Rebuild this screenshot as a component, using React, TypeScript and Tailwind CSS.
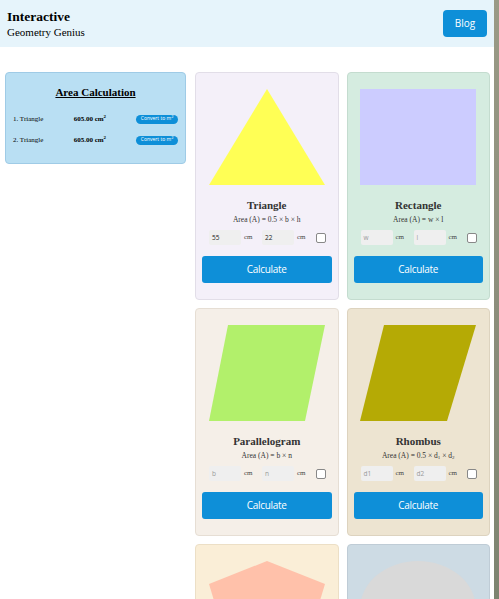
import React from "react";

const serif = { fontFamily: '"Liberation Serif", "Times New Roman", serif' };
const sans = { fontFamily: '"Open Sans", "DejaVu Sans", sans-serif' };

type Card = {
  name: string;
  bg: string;
  shape: React.ReactNode;
  formula: React.ReactNode;
  inputs: [string, string, boolean];
};

function Shape({ children }: { children: React.ReactNode }) {
  return (
    <svg width="116" height="96" viewBox="0 0 116 96" className="block mx-auto">
      {children}
    </svg>
  );
}

const cards: Card[] = [
  {
    name: "Triangle",
    bg: "bg-[#f4f0f9] border-[#e2dee8]",
    shape: (
      <Shape>
        <polygon points="58,0 116,96 0,96" fill="#ffff55" />
      </Shape>
    ),
    formula: <>Area (A) = 0.5 × b × h</>,
    inputs: ["55", "22", true],
  },
  {
    name: "Rectangle",
    bg: "bg-[#d5ece0] border-[#c4dccf]",
    shape: (
      <Shape>
        <rect x="0" y="0" width="116" height="96" fill="#ccccff" />
      </Shape>
    ),
    formula: <>Area (A) = w × l</>,
    inputs: ["w", "l", false],
  },
  {
    name: "Parallelogram",
    bg: "bg-[#f5efe8] border-[#e6ded4]",
    shape: (
      <Shape>
        <polygon points="19,0 116,0 96,96 0,96" fill="#b2f06b" />
      </Shape>
    ),
    formula: <>Area (A) = b × n</>,
    inputs: ["b", "n", false],
  },
  {
    name: "Rhombus",
    bg: "bg-[#ede4d1] border-[#ddd3bf]",
    shape: (
      <Shape>
        <polygon points="24,0 116,0 87,96 0,96" fill="#b5aa05" />
      </Shape>
    ),
    formula: (
      <>
        Area (A) = 0.5 × d<sub className="text-[5px]">1</sub> × d
        <sub className="text-[5px]">2</sub>
      </>
    ),
    inputs: ["d1", "d2", false],
  },
  {
    name: "Pentagon",
    bg: "bg-[#faeed7] border-[#ecdfc6]",
    shape: (
      <Shape>
        <polygon points="58,0 116,23 94,96 22,96 0,23" fill="#ffc1aa" />
      </Shape>
    ),
    formula: <>Area (A) = 0.5 × p × a</>,
    inputs: ["p", "a", false],
  },
  {
    name: "Circle",
    bg: "bg-[#cddbe4] border-[#bfccd6]",
    shape: (
      <Shape>
        <ellipse cx="58" cy="48" rx="58" ry="48" fill="#d9d9d9" />
      </Shape>
    ),
    formula: <>Area (A) = π × r²</>,
    inputs: ["r", "", false],
  },
];

function InputBox({ v, filled }: { v: string; filled: boolean }) {
  return (
    <div
      className={`w-[32px] h-[15px] bg-[#efefef] rounded-[2px] flex items-center pl-[3px] text-[6.5px] ${
        filled ? "text-[#222]" : "text-[#999]"
      }`}
      style={sans}
    >
      {v}
    </div>
  );
}

function ShapeCard({ c }: { c: Card }) {
  return (
    <div className={`border rounded-[4px] ${c.bg} pt-[16px] pb-[16px] px-[6px] h-[228px]`}>
      {c.shape}
      <div
        className="mt-[14px] text-center font-bold text-[11px] leading-[13px] text-[#333]"
        style={serif}
      >
        {c.name}
      </div>
      <div className="mt-[3px] text-center text-[7.5px] leading-[10px] text-[#333]" style={serif}>
        {c.formula}
      </div>
      <div className="mt-[5px] flex items-center pl-[7px] text-[7px] text-[#444]" style={serif}>
        <InputBox v={c.inputs[0]} filled={c.inputs[2]} />
        <span className="ml-[3px] w-[18px]">cm</span>
        <InputBox v={c.inputs[1]} filled={c.inputs[2]} />
        <span className="ml-[3px]">cm</span>
        <div className="ml-[10px] w-[10px] h-[10px] bg-white border border-[#888] rounded-[2px]" />
      </div>
      <button
        className="mt-[11px] w-full h-[27px] bg-[#0e8fd8] rounded-[3px] text-white text-[10px] tracking-[-0.03em]"
        style={sans}
      >
        Calculate
      </button>
    </div>
  );
}

export default function App() {
  return (
    <div className="flex w-[499px] h-[599px] overflow-hidden bg-white">
      <div className="w-[494px] shrink-0 flex flex-col">
        <header className="h-[47px] shrink-0 bg-[#e6f4fb] flex items-center justify-between pl-[7px] pr-[7px]">
          <div style={serif} className="text-black">
            <div className="font-bold text-[13.5px] leading-[15px]">Interactive</div>
            <div className="text-[11px] leading-[14px] mt-[1px]">Geometry Genius</div>
          </div>
          <button
            className="w-[44px] h-[27px] bg-[#0e8fd8] rounded-[4px] text-white text-[10px]"
            style={sans}
          >
            Blog
          </button>
        </header>
        <main className="flex items-start shrink-0 pt-[25px] pl-[5px]">
          <div className="w-[181px] h-[92px] bg-[#b9dff3] border border-[#9fcbe6] rounded-[4px] px-[7px] pt-[13px]">
            <div
              className="text-center font-bold text-[11px] leading-[13px] underline text-black"
              style={serif}
            >
              Area Calculation
            </div>
            {["1. Triangle", "2. Triangle"].map((t, i) => (
              <div
                key={t}
                className={`flex items-center h-[12px] ${i === 0 ? "mt-[14px]" : "mt-[9px]"}`}
                style={serif}
              >
                <span className="w-[61px] text-[7px] text-black">{t}</span>
                <span className="w-[63px] text-[7px] font-bold text-black">
                  605.00 cm<sup className="text-[5px]">2</sup>
                </span>
                <span
                  className="w-[42px] h-[9px] bg-[#0e8fd8] rounded-full text-white text-[5px] flex items-center justify-center"
                  style={sans}
                >
                  Convert to m<sup className="text-[4px]">2</sup>
                </span>
              </div>
            ))}
          </div>
          <div className="ml-[9px] w-[295px] grid grid-cols-2 gap-[8px]">
            {cards.map((c) => (
              <ShapeCard key={c.name} c={c} />
            ))}
          </div>
        </main>
      </div>
      <div className="w-[5px] h-full bg-gradient-to-b from-[#9a9a86] via-[#8c8e7c] to-[#7d8470]" />
    </div>
  );
}
